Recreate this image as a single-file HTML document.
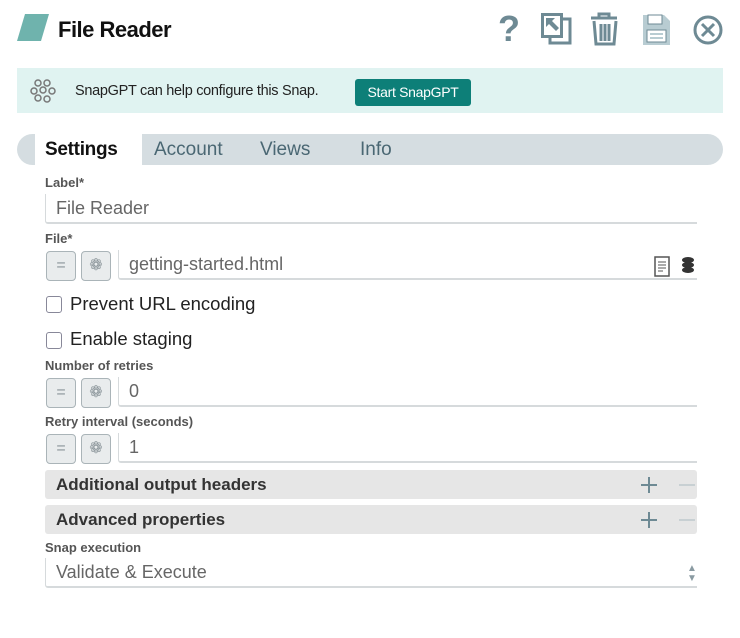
<!DOCTYPE html>
<html><head><meta charset="utf-8"><style>
*{margin:0;padding:0;box-sizing:border-box}
body{width:740px;height:638px;background:#fff;font-family:"Liberation Sans",sans-serif;position:relative;overflow:hidden;color:#222}
.a{position:absolute}
.lbl{position:absolute;left:45px;font-size:13px;font-weight:bold;color:#555}
.inp{position:absolute;border-left:1px solid #d6dadc;border-bottom:2px solid #d6dadc;border-radius:0 0 0 3px;font-size:18px;color:#666;padding-left:10px;line-height:28px}
.btn{position:absolute;width:30px;height:30px;border:1px solid #aab4b8;border-radius:4px;background:#e9eced;color:#8a9499;text-align:center;line-height:28px;font-size:16px}
.cb{position:absolute;left:46px;width:16px;height:17px;border:1px solid #889;border-radius:3px}
.ct{position:absolute;left:70px;font-size:18.5px;color:#222}
.bar{position:absolute;left:45px;width:652px;height:29px;background:#e6e6e6;border-radius:3px;font-size:17px;font-weight:bold;color:#333;padding-left:11px;line-height:29px}
.pm{position:absolute;top:0}
</style></head><body>
<svg class="a" style="left:17px;top:14px" width="34" height="27"><polygon points="8,0 32,0 24,27 0,27" fill="#6fb3ad"/></svg>
<div class="a" style="left:58px;top:17px;font-size:22px;font-weight:bold;color:#111;letter-spacing:-0.5px">File Reader</div>
<svg class="a" style="left:495px;top:10px" width="235" height="40" fill="none" stroke="#6e8a94">
<text x="3" y="31" font-size="36" font-weight="bold" fill="#6e8a94" stroke="none" font-family="Liberation Sans">?</text>
<rect x="55" y="9" width="20" height="24" stroke-width="3"/><rect x="46" y="3" width="22" height="25" fill="#6e8a94" stroke="none"/><rect x="49" y="6" width="16" height="19" fill="#fff" stroke="none"/><polygon points="51,8 60,8 57,11 64,18 61,21 54,14 51,17" fill="#6e8a94" stroke="none"/>
<path d="M96 8 L122 8 M104 8 L104 4 L114 4 L114 8 M99 11 L101 34 L119 34 L121 11 M106 14 L106 31 M110 14 L110 31 M114 14 L114 31" stroke-width="3"/>
<path d="M148 5 L169 5 L175 11 L175 35 L148 35 Z" fill="#b8ccd2" stroke="none"/><rect x="153" y="5" width="14" height="9" fill="#fff"/><rect x="152" y="20" width="19" height="12" fill="#fff"/><path d="M155 24 L168 24 M155 28 L168 28" stroke="#b8ccd2" stroke-width="2"/>
<circle cx="213" cy="20" r="13" stroke-width="3"/><path d="M207 14 L219 26 M219 14 L207 26" stroke-width="3"/>
</svg>
<div class="a" style="left:17px;top:68px;width:706px;height:45px;background:#e0f3f1"></div>
<svg class="a" style="left:30px;top:78px" width="28" height="28" fill="none" stroke="#777" stroke-width="1.5"><circle cx="8" cy="5" r="3"/><circle cx="17" cy="5" r="3"/><circle cx="4" cy="13" r="3"/><circle cx="13" cy="12" r="3"/><circle cx="22" cy="13" r="3"/><circle cx="8" cy="20" r="3"/><circle cx="17" cy="21" r="3"/></svg>
<div class="a" style="left:75px;top:83px;font-size:14.5px;color:#222;letter-spacing:-0.3px">SnapGPT can help configure this Snap.</div>
<div class="a" style="left:355px;top:79px;width:116px;height:27px;background:#0d7f78;border-radius:3px;color:#fff;font-size:14px;text-align:center;line-height:27px;letter-spacing:-0.3px">Start SnapGPT</div>
<div class="a" style="left:17px;top:134px;width:706px;height:31px;background:#d5dde1;border-radius:16px"></div>
<div class="a" style="left:35px;top:134px;width:107px;height:31px;background:#fff"></div>
<div class="a" style="left:45px;top:139px;font-size:19px;font-weight:bold;color:#111;letter-spacing:-0.3px">Settings</div>
<div class="a" style="left:154px;top:139px;font-size:19px;color:#4a6773">Account</div>
<div class="a" style="left:260px;top:139px;font-size:19px;color:#4a6773">Views</div>
<div class="a" style="left:360px;top:139px;font-size:19px;color:#4a6773">Info</div>
<div class="lbl" style="top:175px">Label*</div>
<div class="inp" style="left:45px;top:194px;width:652px">File Reader</div>
<div class="lbl" style="top:231px">File*</div>
<div class="btn" style="left:46px;top:251px">=</div><div class="btn" style="left:81px;top:251px">❁</div>
<div class="inp" style="left:118px;top:250px;width:579px">getting-started.html</div>
<svg class="a" style="left:654px;top:255px" width="44" height="24"><rect x="1" y="2" width="14" height="19" fill="none" stroke="#555" stroke-width="1.5"/><path d="M4 7h8M4 10h8M4 13h8M4 16h5" stroke="#555"/><ellipse cx="34" cy="5" rx="6" ry="3" fill="#333"/><ellipse cx="34" cy="10" rx="6" ry="3" fill="#333"/><ellipse cx="34" cy="15" rx="6" ry="3" fill="#333"/></svg>
<div class="cb" style="top:296px"></div><div class="ct" style="top:293px">Prevent URL encoding</div>
<div class="cb" style="top:332px"></div><div class="ct" style="top:328px">Enable staging</div>
<div class="lbl" style="top:358px">Number of retries</div>
<div class="btn" style="left:46px;top:378px">=</div><div class="btn" style="left:81px;top:378px">❁</div>
<div class="inp" style="left:118px;top:377px;width:579px">0</div>
<div class="lbl" style="top:414px">Retry interval (seconds)</div>
<div class="btn" style="left:46px;top:434px">=</div><div class="btn" style="left:81px;top:434px">❁</div>
<div class="inp" style="left:118px;top:433px;width:579px">1</div>
<div class="bar" style="top:470px">Additional output headers<svg class="pm" style="left:594px;top:5px" width="60" height="20"><path d="M10 2v16M2 10h16" stroke="#6e8a94" stroke-width="2"/><path d="M40 10h16" stroke="#c8d0d3" stroke-width="2"/></svg></div>
<div class="bar" style="top:505px">Advanced properties<svg class="pm" style="left:594px;top:5px" width="60" height="20"><path d="M10 2v16M2 10h16" stroke="#6e8a94" stroke-width="2"/><path d="M40 10h16" stroke="#c8d0d3" stroke-width="2"/></svg></div>
<div class="lbl" style="top:540px">Snap execution</div>
<div class="inp" style="left:45px;top:558px;width:652px">Validate &amp; Execute</div>
<div class="a" style="left:687px;top:564px;font-size:10px;color:#8a9ba2;line-height:10px">▲<br>▼</div>
</body></html>
